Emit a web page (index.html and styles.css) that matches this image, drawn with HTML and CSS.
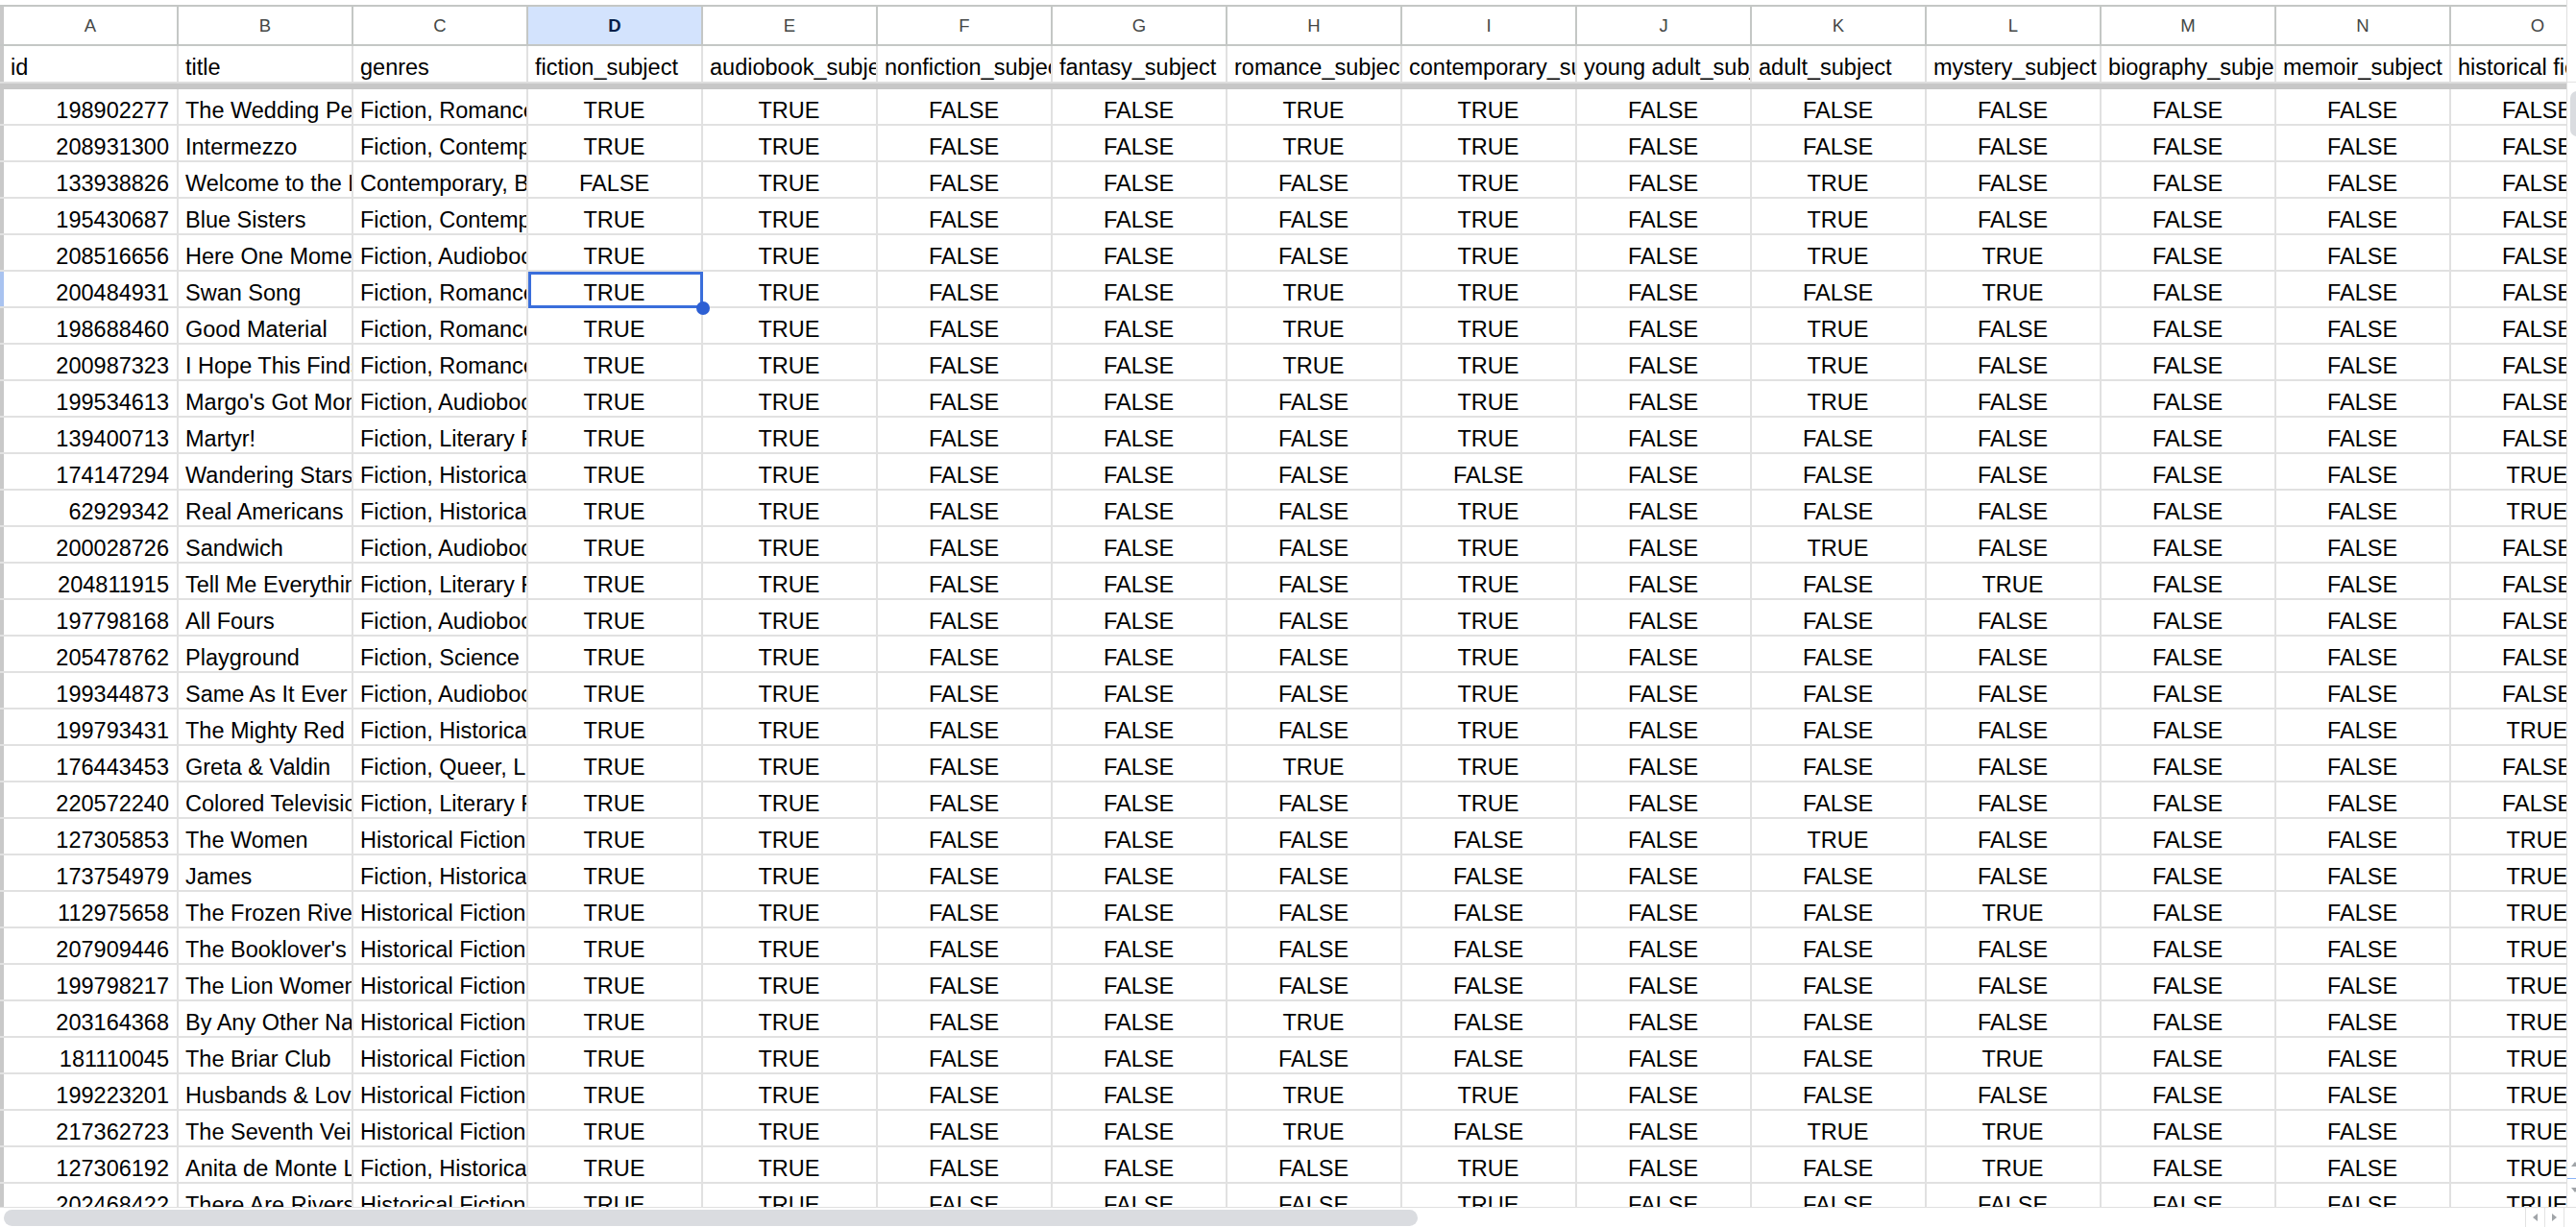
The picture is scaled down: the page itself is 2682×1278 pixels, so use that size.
FILE: index.html
```html
<!DOCTYPE html>
<html lang="en">
<head>
<meta charset="utf-8">
<title>books sheet</title>
<link rel="stylesheet" href="styles.css">
</head>
<body>
<div class="app">
  <div class="sheet">
    <div class="row letters">
      <span class="gut"></span><span>A</span><span>B</span><span>C</span><span class="on">D</span><span>E</span><span>F</span><span>G</span><span>H</span><span>I</span><span>J</span><span>K</span><span>L</span><span>M</span><span>N</span><span>O</span>
    </div>
    <div class="row labels">
      <span class="gut"></span><span>id</span><span>title</span><span>genres</span><span>fiction_subject</span><span>audiobook_subject</span><span>nonfiction_subject</span><span>fantasy_subject</span><span>romance_subject</span><span>contemporary_subject</span><span>young adult_subject</span><span>adult_subject</span><span>mystery_subject</span><span>biography_subject</span><span>memoir_subject</span><span>historical fiction_subject</span>
    </div>
    <div class="freeze"></div>
    <div class="row"><span class="gut"></span><span>198902277</span><span>The Wedding People</span><span>Fiction, Romance, Contemporary</span><span>TRUE</span><span>TRUE</span><span>FALSE</span><span>FALSE</span><span>TRUE</span><span>TRUE</span><span>FALSE</span><span>FALSE</span><span>FALSE</span><span>FALSE</span><span>FALSE</span><span>FALSE</span></div>
    <div class="row"><span class="gut"></span><span>208931300</span><span>Intermezzo</span><span>Fiction, Contemporary, Literary Fiction</span><span>TRUE</span><span>TRUE</span><span>FALSE</span><span>FALSE</span><span>TRUE</span><span>TRUE</span><span>FALSE</span><span>FALSE</span><span>FALSE</span><span>FALSE</span><span>FALSE</span><span>FALSE</span></div>
    <div class="row"><span class="gut"></span><span>133938826</span><span>Welcome to the Hyunam-dong Bookshop</span><span>Contemporary, Books About Books</span><span>FALSE</span><span>TRUE</span><span>FALSE</span><span>FALSE</span><span>FALSE</span><span>TRUE</span><span>FALSE</span><span>TRUE</span><span>FALSE</span><span>FALSE</span><span>FALSE</span><span>FALSE</span></div>
    <div class="row"><span class="gut"></span><span>195430687</span><span>Blue Sisters</span><span>Fiction, Contemporary, Literary Fiction</span><span>TRUE</span><span>TRUE</span><span>FALSE</span><span>FALSE</span><span>FALSE</span><span>TRUE</span><span>FALSE</span><span>TRUE</span><span>FALSE</span><span>FALSE</span><span>FALSE</span><span>FALSE</span></div>
    <div class="row"><span class="gut"></span><span>208516656</span><span>Here One Moment</span><span>Fiction, Audiobook, Contemporary</span><span>TRUE</span><span>TRUE</span><span>FALSE</span><span>FALSE</span><span>FALSE</span><span>TRUE</span><span>FALSE</span><span>TRUE</span><span>TRUE</span><span>FALSE</span><span>FALSE</span><span>FALSE</span></div>
    <div class="row"><span class="gut on"></span><span>200484931</span><span>Swan Song</span><span>Fiction, Romance, Contemporary</span><span class="sel">TRUE</span><span>TRUE</span><span>FALSE</span><span>FALSE</span><span>TRUE</span><span>TRUE</span><span>FALSE</span><span>FALSE</span><span>TRUE</span><span>FALSE</span><span>FALSE</span><span>FALSE</span></div>
    <div class="row"><span class="gut"></span><span>198688460</span><span>Good Material</span><span>Fiction, Romance, Contemporary</span><span>TRUE</span><span>TRUE</span><span>FALSE</span><span>FALSE</span><span>TRUE</span><span>TRUE</span><span>FALSE</span><span>TRUE</span><span>FALSE</span><span>FALSE</span><span>FALSE</span><span>FALSE</span></div>
    <div class="row"><span class="gut"></span><span>200987323</span><span>I Hope This Finds You Well</span><span>Fiction, Romance, Contemporary</span><span>TRUE</span><span>TRUE</span><span>FALSE</span><span>FALSE</span><span>TRUE</span><span>TRUE</span><span>FALSE</span><span>TRUE</span><span>FALSE</span><span>FALSE</span><span>FALSE</span><span>FALSE</span></div>
    <div class="row"><span class="gut"></span><span>199534613</span><span>Margo's Got Money Troubles</span><span>Fiction, Audiobook, Contemporary</span><span>TRUE</span><span>TRUE</span><span>FALSE</span><span>FALSE</span><span>FALSE</span><span>TRUE</span><span>FALSE</span><span>TRUE</span><span>FALSE</span><span>FALSE</span><span>FALSE</span><span>FALSE</span></div>
    <div class="row"><span class="gut"></span><span>139400713</span><span>Martyr!</span><span>Fiction, Literary Fiction, Poetry</span><span>TRUE</span><span>TRUE</span><span>FALSE</span><span>FALSE</span><span>FALSE</span><span>TRUE</span><span>FALSE</span><span>FALSE</span><span>FALSE</span><span>FALSE</span><span>FALSE</span><span>FALSE</span></div>
    <div class="row"><span class="gut"></span><span>174147294</span><span>Wandering Stars</span><span>Fiction, Historical Fiction, Literary Fiction</span><span>TRUE</span><span>TRUE</span><span>FALSE</span><span>FALSE</span><span>FALSE</span><span>FALSE</span><span>FALSE</span><span>FALSE</span><span>FALSE</span><span>FALSE</span><span>FALSE</span><span>TRUE</span></div>
    <div class="row"><span class="gut"></span><span>62929342</span><span>Real Americans</span><span>Fiction, Historical Fiction, Contemporary</span><span>TRUE</span><span>TRUE</span><span>FALSE</span><span>FALSE</span><span>FALSE</span><span>TRUE</span><span>FALSE</span><span>FALSE</span><span>FALSE</span><span>FALSE</span><span>FALSE</span><span>TRUE</span></div>
    <div class="row"><span class="gut"></span><span>200028726</span><span>Sandwich</span><span>Fiction, Audiobook, Contemporary</span><span>TRUE</span><span>TRUE</span><span>FALSE</span><span>FALSE</span><span>FALSE</span><span>TRUE</span><span>FALSE</span><span>TRUE</span><span>FALSE</span><span>FALSE</span><span>FALSE</span><span>FALSE</span></div>
    <div class="row"><span class="gut"></span><span>204811915</span><span>Tell Me Everything</span><span>Fiction, Literary Fiction, Mystery</span><span>TRUE</span><span>TRUE</span><span>FALSE</span><span>FALSE</span><span>FALSE</span><span>TRUE</span><span>FALSE</span><span>FALSE</span><span>TRUE</span><span>FALSE</span><span>FALSE</span><span>FALSE</span></div>
    <div class="row"><span class="gut"></span><span>197798168</span><span>All Fours</span><span>Fiction, Audiobook, Contemporary</span><span>TRUE</span><span>TRUE</span><span>FALSE</span><span>FALSE</span><span>FALSE</span><span>TRUE</span><span>FALSE</span><span>FALSE</span><span>FALSE</span><span>FALSE</span><span>FALSE</span><span>FALSE</span></div>
    <div class="row"><span class="gut"></span><span>205478762</span><span>Playground</span><span>Fiction, Science Fiction, Literary Fiction</span><span>TRUE</span><span>TRUE</span><span>FALSE</span><span>FALSE</span><span>FALSE</span><span>TRUE</span><span>FALSE</span><span>FALSE</span><span>FALSE</span><span>FALSE</span><span>FALSE</span><span>FALSE</span></div>
    <div class="row"><span class="gut"></span><span>199344873</span><span>Same As It Ever Was</span><span>Fiction, Audiobook, Contemporary</span><span>TRUE</span><span>TRUE</span><span>FALSE</span><span>FALSE</span><span>FALSE</span><span>TRUE</span><span>FALSE</span><span>FALSE</span><span>FALSE</span><span>FALSE</span><span>FALSE</span><span>FALSE</span></div>
    <div class="row"><span class="gut"></span><span>199793431</span><span>The Mighty Red</span><span>Fiction, Historical Fiction, Contemporary</span><span>TRUE</span><span>TRUE</span><span>FALSE</span><span>FALSE</span><span>FALSE</span><span>TRUE</span><span>FALSE</span><span>FALSE</span><span>FALSE</span><span>FALSE</span><span>FALSE</span><span>TRUE</span></div>
    <div class="row"><span class="gut"></span><span>176443453</span><span>Greta &amp; Valdin</span><span>Fiction, Queer, LGBT, Romance</span><span>TRUE</span><span>TRUE</span><span>FALSE</span><span>FALSE</span><span>TRUE</span><span>TRUE</span><span>FALSE</span><span>FALSE</span><span>FALSE</span><span>FALSE</span><span>FALSE</span><span>FALSE</span></div>
    <div class="row"><span class="gut"></span><span>220572240</span><span>Colored Television</span><span>Fiction, Literary Fiction, Contemporary</span><span>TRUE</span><span>TRUE</span><span>FALSE</span><span>FALSE</span><span>FALSE</span><span>TRUE</span><span>FALSE</span><span>FALSE</span><span>FALSE</span><span>FALSE</span><span>FALSE</span><span>FALSE</span></div>
    <div class="row"><span class="gut"></span><span>127305853</span><span>The Women</span><span>Historical Fiction, Fiction, Audiobook</span><span>TRUE</span><span>TRUE</span><span>FALSE</span><span>FALSE</span><span>FALSE</span><span>FALSE</span><span>FALSE</span><span>TRUE</span><span>FALSE</span><span>FALSE</span><span>FALSE</span><span>TRUE</span></div>
    <div class="row"><span class="gut"></span><span>173754979</span><span>James</span><span>Fiction, Historical Fiction, Literary Fiction</span><span>TRUE</span><span>TRUE</span><span>FALSE</span><span>FALSE</span><span>FALSE</span><span>FALSE</span><span>FALSE</span><span>FALSE</span><span>FALSE</span><span>FALSE</span><span>FALSE</span><span>TRUE</span></div>
    <div class="row"><span class="gut"></span><span>112975658</span><span>The Frozen River</span><span>Historical Fiction, Mystery, Fiction</span><span>TRUE</span><span>TRUE</span><span>FALSE</span><span>FALSE</span><span>FALSE</span><span>FALSE</span><span>FALSE</span><span>FALSE</span><span>TRUE</span><span>FALSE</span><span>FALSE</span><span>TRUE</span></div>
    <div class="row"><span class="gut"></span><span>207909446</span><span>The Booklover's Library</span><span>Historical Fiction, Fiction, Books About Books</span><span>TRUE</span><span>TRUE</span><span>FALSE</span><span>FALSE</span><span>FALSE</span><span>FALSE</span><span>FALSE</span><span>FALSE</span><span>FALSE</span><span>FALSE</span><span>FALSE</span><span>TRUE</span></div>
    <div class="row"><span class="gut"></span><span>199798217</span><span>The Lion Women of Tehran</span><span>Historical Fiction, Fiction, Audiobook</span><span>TRUE</span><span>TRUE</span><span>FALSE</span><span>FALSE</span><span>FALSE</span><span>FALSE</span><span>FALSE</span><span>FALSE</span><span>FALSE</span><span>FALSE</span><span>FALSE</span><span>TRUE</span></div>
    <div class="row"><span class="gut"></span><span>203164368</span><span>By Any Other Name</span><span>Historical Fiction, Romance, Fiction</span><span>TRUE</span><span>TRUE</span><span>FALSE</span><span>FALSE</span><span>TRUE</span><span>FALSE</span><span>FALSE</span><span>FALSE</span><span>FALSE</span><span>FALSE</span><span>FALSE</span><span>TRUE</span></div>
    <div class="row"><span class="gut"></span><span>181110045</span><span>The Briar Club</span><span>Historical Fiction, Mystery, Fiction</span><span>TRUE</span><span>TRUE</span><span>FALSE</span><span>FALSE</span><span>FALSE</span><span>FALSE</span><span>FALSE</span><span>FALSE</span><span>TRUE</span><span>FALSE</span><span>FALSE</span><span>TRUE</span></div>
    <div class="row"><span class="gut"></span><span>199223201</span><span>Husbands &amp; Lovers</span><span>Historical Fiction, Romance, Fiction</span><span>TRUE</span><span>TRUE</span><span>FALSE</span><span>FALSE</span><span>TRUE</span><span>TRUE</span><span>FALSE</span><span>FALSE</span><span>FALSE</span><span>FALSE</span><span>FALSE</span><span>TRUE</span></div>
    <div class="row"><span class="gut"></span><span>217362723</span><span>The Seventh Veil of Salome</span><span>Historical Fiction, Romance, Mystery</span><span>TRUE</span><span>TRUE</span><span>FALSE</span><span>FALSE</span><span>TRUE</span><span>FALSE</span><span>FALSE</span><span>TRUE</span><span>TRUE</span><span>FALSE</span><span>FALSE</span><span>TRUE</span></div>
    <div class="row"><span class="gut"></span><span>127306192</span><span>Anita de Monte Laughs Last</span><span>Fiction, Historical Fiction, Contemporary</span><span>TRUE</span><span>TRUE</span><span>FALSE</span><span>FALSE</span><span>FALSE</span><span>TRUE</span><span>FALSE</span><span>FALSE</span><span>TRUE</span><span>FALSE</span><span>FALSE</span><span>TRUE</span></div>
    <div class="row"><span class="gut"></span><span>202468422</span><span>There Are Rivers in the Sky</span><span>Historical Fiction, Fiction, Contemporary</span><span>TRUE</span><span>TRUE</span><span>FALSE</span><span>FALSE</span><span>FALSE</span><span>TRUE</span><span>FALSE</span><span>FALSE</span><span>FALSE</span><span>FALSE</span><span>FALSE</span><span>TRUE</span></div>
  </div>
  <div class="vscroll">
    <div class="vtop"></div>
    <div class="vthumb"></div>
    <div class="vspace"></div>
    <div class="vbtn"><i class="tri up"></i></div>
    <div class="vline"></div>
    <div class="vbtn"><i class="tri down"></i></div>
  </div>
  <div class="hscroll">
    <div class="hthumb"></div>
    <div class="harrows">
      <div class="hbtn"><i class="tri left"></i></div>
      <div class="hbtn"><i class="tri right"></i></div>
      <div class="hend"></div>
    </div>
  </div>
</div>
</body>
</html>
```
FILE: styles.css
```css
html, body {
  margin: 0;
  padding: 0;
}
body {
  width: 2682px;
  height: 1278px;
  overflow: hidden;
  background: #ffffff;
  font-family: "Liberation Sans", Arial, sans-serif;
  color: #000;
}
.app {
  display: grid;
  grid-template-columns: 2672px 10px;
  grid-template-rows: 1257px 21px;
  width: 2682px;
  height: 1278px;
}
.sheet {
  overflow: hidden;
  padding-top: 5px;
  box-sizing: border-box;
  position: relative;
}
.row {
  display: grid;
  grid-template-columns: 4px repeat(15, 182px);
  width: 2734px;
}
.row > span {
  box-sizing: border-box;
  height: 38px;
  line-height: 28px;
  padding: 8px 8px 0 7px;
  border-right: 2px solid #e1e1e1;
  border-bottom: 2px solid #e1e1e1;
  overflow: hidden;
  white-space: nowrap;
  font-size: 23.5px;
  text-align: left;
}
.row > span:nth-child(2) {
  text-align: right;
}
.row > span:nth-child(n+5) {
  text-align: center;
}
.row > .gut {
  padding: 0;
  border-right: 0;
  background: #c9c9c9;
}
.row > .gut.on {
  background: #a9c3f0;
}

/* column letters */
.letters > span {
  height: 43px;
  line-height: 39px;
  border-top: 2px solid #c4c7c5;
  border-bottom: 2px solid #c4c7c5;
  border-right-color: #c4c7c5;
  font-size: 18.5px;
  color: #444746;
  padding: 0;
}
.letters > span:nth-child(n) {
  text-align: center;
}
.letters > .gut {
  border-right: 0;
}
.letters > .on {
  background: #d3e3fd;
  color: #041e49;
  font-weight: bold;
}

/* header labels */
.labels > span {
  height: 37px;
  line-height: 27px;
  padding-top: 9px;
  border-bottom: 0;
}
.labels > span:nth-child(n) {
  text-align: left;
}
.freeze {
  height: 8px;
  width: 2734px;
  box-sizing: border-box;
  background: #c7c7c7;
  border-top: 2px solid #dedede;
}

/* selected cell */
.row > .sel {
  position: relative;
  overflow: visible;
  z-index: 2;
}
.sel::after {
  content: "";
  position: absolute;
  left: 0;
  top: 0;
  right: -2px;
  bottom: -2px;
  border: 3px solid #3a6edb;
}
.sel::before {
  content: "";
  position: absolute;
  right: -9px;
  bottom: -9px;
  width: 14px;
  height: 14px;
  border-radius: 50%;
  background: #2d5fd3;
  z-index: 3;
}

/* vertical scrollbar */
.vscroll {
  display: flex;
  flex-direction: column;
  border-left: 1px solid #e0e0e0;
  background: #ffffff;
  overflow: hidden;
}
.vtop {
  height: 85px;
  border-bottom: 1px solid #e3e3e3;
  flex: none;
}
.vthumb {
  flex: none;
  margin: 9px 0 0 3px;
  width: 14px;
  height: 47px;
  border-radius: 7px;
  background: #dadce0;
}
.vspace {
  flex: 1;
}
.vbtn {
  flex: none;
  height: 22px;
  display: flex;
  align-items: center;
  padding-left: 4px;
}
.vline {
  flex: none;
  height: 1px;
  background: #8ab4f8;
  margin-top: 4px;
}
.vbtn:last-child {
  margin-bottom: 7px;
}

/* horizontal scrollbar */
.hscroll {
  grid-column: 1 / 3;
  border-top: 1px solid #e0e0e0;
  display: flex;
  align-items: flex-start;
  box-sizing: border-box;
  background: #ffffff;
}
.hthumb {
  margin: 2px 0 0 4px;
  width: 1472px;
  height: 17px;
  border-radius: 9px;
  background: #dadce0;
}
.harrows {
  margin-left: auto;
  display: flex;
  height: 20px;
}
.hbtn {
  width: 20px;
  box-sizing: border-box;
  border-left: 1px solid #e3e3e3;
  display: flex;
  align-items: center;
  justify-content: center;
}
.hend {
  width: 12px;
  border-left: 1px solid #e3e3e3;
}
.tri {
  display: block;
  width: 0;
  height: 0;
}
.tri.left {
  border-top: 4px solid transparent;
  border-bottom: 4px solid transparent;
  border-right: 5px solid #a0a4a8;
}
.tri.right {
  border-top: 4px solid transparent;
  border-bottom: 4px solid transparent;
  border-left: 5px solid #a0a4a8;
}
.tri.up {
  border-left: 4px solid transparent;
  border-right: 4px solid transparent;
  border-bottom: 5px solid #a0a4a8;
}
.tri.down {
  border-left: 4px solid transparent;
  border-right: 4px solid transparent;
  border-top: 5px solid #a0a4a8;
}
```
